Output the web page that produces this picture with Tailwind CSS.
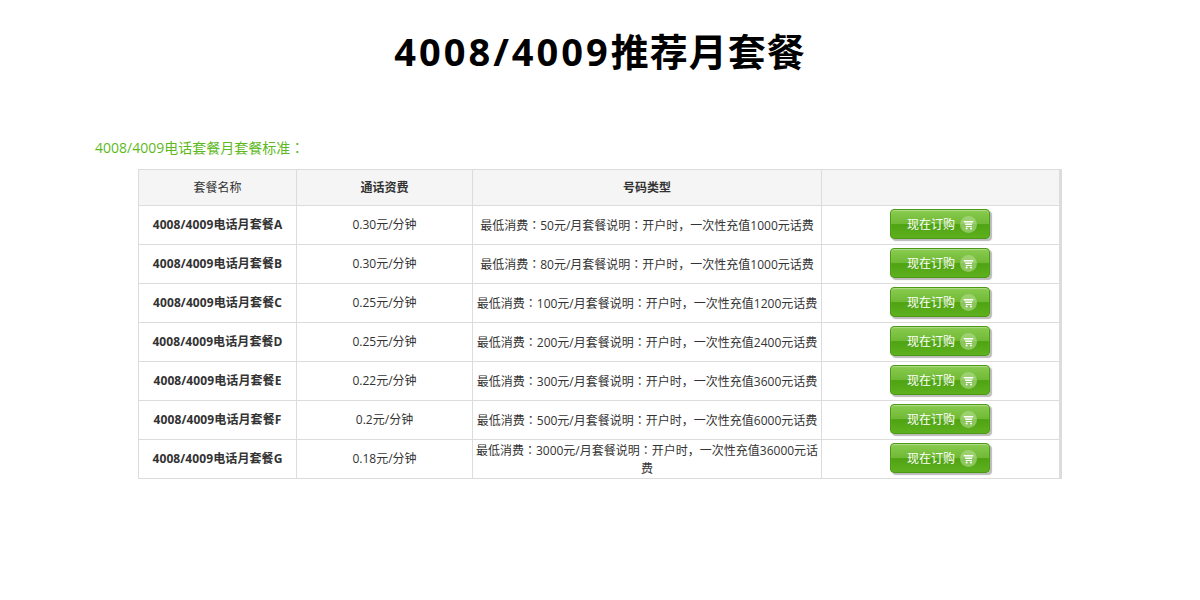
<!DOCTYPE html>
<html lang="zh-CN">
<head>
  <meta charset="UTF-8">
  <title>4008/4009推荐月套餐</title>
  <script src="https://cdn.jsdelivr.net/npm/@tailwindcss/browser@4"></script>
</head>
<body class="bg-white font-['Open_Sans','Noto_Sans_CJK_SC',sans-serif] text-[#333] overflow-hidden">
  <h1 class="pt-[25px] h-[130px] text-center text-[38px] leading-[52px] font-bold text-black tracking-[1px]"><span class="tracking-[3px]">4008/4009</span>推荐月套餐</h1>
  <p class="pl-[95px] h-[39px] pt-[7px] text-[14px] leading-[20px] text-[#5eb91e]">4008/4009电话套餐月套餐标准<span lang="zh-TW" class="font-['Noto_Sans_CJK_TC']">：</span></p>
  <table class="ml-[138px] w-[924px] table-fixed border-collapse border-r-[3px] border-[#dcdcdc] text-[12px] leading-[18px] text-center">
    <colgroup>
      <col class="w-[158px]">
      <col class="w-[176px]">
      <col class="w-[349px]">
      <col>
    </colgroup>
    <thead>
      <tr class="h-[36px] bg-[#f5f5f5]">
        <th class="border border-[#dcdcdc] font-normal">套餐名称</th>
        <th class="border border-[#dcdcdc] font-bold">通话资费</th>
        <th class="border border-[#dcdcdc] font-bold">号码类型</th>
        <th class="border border-[#dcdcdc]"></th>
      </tr>
    </thead>
    <tbody>
      <tr class="h-[39px]">
        <td class="border border-[#dcdcdc] font-bold tracking-[0.1px]">4008/4009电话月套餐A</td>
        <td class="border border-[#dcdcdc]">0.30元/分钟</td>
        <td class="border border-[#dcdcdc] px-[2px]">最低消费<span lang="zh-TW" class="font-['Noto_Sans_CJK_TC']">：</span>50元/月套餐说明<span lang="zh-TW" class="font-['Noto_Sans_CJK_TC']">：</span>开户时，一次性充值1000元话费</td>
        <td class="border border-[#dcdcdc] pr-[2px]">
          <a class="mx-auto -mt-[2px] flex h-[30px] w-[100px] items-center justify-center gap-[5px] pl-[5px] rounded-[4px] border border-[#4d9a16] bg-[linear-gradient(#8acb50,#6fb934_50%,#4fa312_52%,#5eb01e)] text-[12px] text-white shadow-[inset_0_1px_1px_rgba(255,255,255,.35),2px_2px_1px_#bbb]"><span class="pt-[2px]">现在订购</span><svg width="17" height="17" viewBox="0 0 17 17"><circle cx="8.5" cy="8.5" r="8.5" fill="#b4dc90" fill-opacity=".6"/><path d="M3.5 5h10l-.6 1.6H4.2zM5 7.6h7.4l-.5 1.4H5.4zM5.8 10h6v1h-6z" fill="#fff"/><circle cx="6.6" cy="12.6" r="1" fill="#fff"/><circle cx="11" cy="12.6" r="1" fill="#fff"/></svg></a>
        </td>
      </tr>
      <tr class="h-[39px]">
        <td class="border border-[#dcdcdc] font-bold tracking-[0.1px]">4008/4009电话月套餐B</td>
        <td class="border border-[#dcdcdc]">0.30元/分钟</td>
        <td class="border border-[#dcdcdc] px-[2px]">最低消费<span lang="zh-TW" class="font-['Noto_Sans_CJK_TC']">：</span>80元/月套餐说明<span lang="zh-TW" class="font-['Noto_Sans_CJK_TC']">：</span>开户时，一次性充值1000元话费</td>
        <td class="border border-[#dcdcdc] pr-[2px]">
          <a class="mx-auto -mt-[2px] flex h-[30px] w-[100px] items-center justify-center gap-[5px] pl-[5px] rounded-[4px] border border-[#4d9a16] bg-[linear-gradient(#8acb50,#6fb934_50%,#4fa312_52%,#5eb01e)] text-[12px] text-white shadow-[inset_0_1px_1px_rgba(255,255,255,.35),2px_2px_1px_#bbb]"><span class="pt-[2px]">现在订购</span><svg width="17" height="17" viewBox="0 0 17 17"><circle cx="8.5" cy="8.5" r="8.5" fill="#b4dc90" fill-opacity=".6"/><path d="M3.5 5h10l-.6 1.6H4.2zM5 7.6h7.4l-.5 1.4H5.4zM5.8 10h6v1h-6z" fill="#fff"/><circle cx="6.6" cy="12.6" r="1" fill="#fff"/><circle cx="11" cy="12.6" r="1" fill="#fff"/></svg></a>
        </td>
      </tr>
      <tr class="h-[39px]">
        <td class="border border-[#dcdcdc] font-bold tracking-[0.1px]">4008/4009电话月套餐C</td>
        <td class="border border-[#dcdcdc]">0.25元/分钟</td>
        <td class="border border-[#dcdcdc] px-[2px]">最低消费<span lang="zh-TW" class="font-['Noto_Sans_CJK_TC']">：</span>100元/月套餐说明<span lang="zh-TW" class="font-['Noto_Sans_CJK_TC']">：</span>开户时，一次性充值1200元话费</td>
        <td class="border border-[#dcdcdc] pr-[2px]">
          <a class="mx-auto -mt-[2px] flex h-[30px] w-[100px] items-center justify-center gap-[5px] pl-[5px] rounded-[4px] border border-[#4d9a16] bg-[linear-gradient(#8acb50,#6fb934_50%,#4fa312_52%,#5eb01e)] text-[12px] text-white shadow-[inset_0_1px_1px_rgba(255,255,255,.35),2px_2px_1px_#bbb]"><span class="pt-[2px]">现在订购</span><svg width="17" height="17" viewBox="0 0 17 17"><circle cx="8.5" cy="8.5" r="8.5" fill="#b4dc90" fill-opacity=".6"/><path d="M3.5 5h10l-.6 1.6H4.2zM5 7.6h7.4l-.5 1.4H5.4zM5.8 10h6v1h-6z" fill="#fff"/><circle cx="6.6" cy="12.6" r="1" fill="#fff"/><circle cx="11" cy="12.6" r="1" fill="#fff"/></svg></a>
        </td>
      </tr>
      <tr class="h-[39px]">
        <td class="border border-[#dcdcdc] font-bold tracking-[0.1px]">4008/4009电话月套餐D</td>
        <td class="border border-[#dcdcdc]">0.25元/分钟</td>
        <td class="border border-[#dcdcdc] px-[2px]">最低消费<span lang="zh-TW" class="font-['Noto_Sans_CJK_TC']">：</span>200元/月套餐说明<span lang="zh-TW" class="font-['Noto_Sans_CJK_TC']">：</span>开户时，一次性充值2400元话费</td>
        <td class="border border-[#dcdcdc] pr-[2px]">
          <a class="mx-auto -mt-[2px] flex h-[30px] w-[100px] items-center justify-center gap-[5px] pl-[5px] rounded-[4px] border border-[#4d9a16] bg-[linear-gradient(#8acb50,#6fb934_50%,#4fa312_52%,#5eb01e)] text-[12px] text-white shadow-[inset_0_1px_1px_rgba(255,255,255,.35),2px_2px_1px_#bbb]"><span class="pt-[2px]">现在订购</span><svg width="17" height="17" viewBox="0 0 17 17"><circle cx="8.5" cy="8.5" r="8.5" fill="#b4dc90" fill-opacity=".6"/><path d="M3.5 5h10l-.6 1.6H4.2zM5 7.6h7.4l-.5 1.4H5.4zM5.8 10h6v1h-6z" fill="#fff"/><circle cx="6.6" cy="12.6" r="1" fill="#fff"/><circle cx="11" cy="12.6" r="1" fill="#fff"/></svg></a>
        </td>
      </tr>
      <tr class="h-[39px]">
        <td class="border border-[#dcdcdc] font-bold tracking-[0.1px]">4008/4009电话月套餐E</td>
        <td class="border border-[#dcdcdc]">0.22元/分钟</td>
        <td class="border border-[#dcdcdc] px-[2px]">最低消费<span lang="zh-TW" class="font-['Noto_Sans_CJK_TC']">：</span>300元/月套餐说明<span lang="zh-TW" class="font-['Noto_Sans_CJK_TC']">：</span>开户时，一次性充值3600元话费</td>
        <td class="border border-[#dcdcdc] pr-[2px]">
          <a class="mx-auto -mt-[2px] flex h-[30px] w-[100px] items-center justify-center gap-[5px] pl-[5px] rounded-[4px] border border-[#4d9a16] bg-[linear-gradient(#8acb50,#6fb934_50%,#4fa312_52%,#5eb01e)] text-[12px] text-white shadow-[inset_0_1px_1px_rgba(255,255,255,.35),2px_2px_1px_#bbb]"><span class="pt-[2px]">现在订购</span><svg width="17" height="17" viewBox="0 0 17 17"><circle cx="8.5" cy="8.5" r="8.5" fill="#b4dc90" fill-opacity=".6"/><path d="M3.5 5h10l-.6 1.6H4.2zM5 7.6h7.4l-.5 1.4H5.4zM5.8 10h6v1h-6z" fill="#fff"/><circle cx="6.6" cy="12.6" r="1" fill="#fff"/><circle cx="11" cy="12.6" r="1" fill="#fff"/></svg></a>
        </td>
      </tr>
      <tr class="h-[39px]">
        <td class="border border-[#dcdcdc] font-bold tracking-[0.1px]">4008/4009电话月套餐F</td>
        <td class="border border-[#dcdcdc]">0.2元/分钟</td>
        <td class="border border-[#dcdcdc] px-[2px]">最低消费<span lang="zh-TW" class="font-['Noto_Sans_CJK_TC']">：</span>500元/月套餐说明<span lang="zh-TW" class="font-['Noto_Sans_CJK_TC']">：</span>开户时，一次性充值6000元话费</td>
        <td class="border border-[#dcdcdc] pr-[2px]">
          <a class="mx-auto -mt-[2px] flex h-[30px] w-[100px] items-center justify-center gap-[5px] pl-[5px] rounded-[4px] border border-[#4d9a16] bg-[linear-gradient(#8acb50,#6fb934_50%,#4fa312_52%,#5eb01e)] text-[12px] text-white shadow-[inset_0_1px_1px_rgba(255,255,255,.35),2px_2px_1px_#bbb]"><span class="pt-[2px]">现在订购</span><svg width="17" height="17" viewBox="0 0 17 17"><circle cx="8.5" cy="8.5" r="8.5" fill="#b4dc90" fill-opacity=".6"/><path d="M3.5 5h10l-.6 1.6H4.2zM5 7.6h7.4l-.5 1.4H5.4zM5.8 10h6v1h-6z" fill="#fff"/><circle cx="6.6" cy="12.6" r="1" fill="#fff"/><circle cx="11" cy="12.6" r="1" fill="#fff"/></svg></a>
        </td>
      </tr>
      <tr class="h-[39px]">
        <td class="border border-[#dcdcdc] font-bold tracking-[0.1px]">4008/4009电话月套餐G</td>
        <td class="border border-[#dcdcdc]">0.18元/分钟</td>
        <td class="border border-[#dcdcdc] px-[2px]">最低消费<span lang="zh-TW" class="font-['Noto_Sans_CJK_TC']">：</span>3000元/月套餐说明<span lang="zh-TW" class="font-['Noto_Sans_CJK_TC']">：</span>开户时，一次性充值36000元话费</td>
        <td class="border border-[#dcdcdc] pr-[2px]">
          <a class="mx-auto -mt-[2px] flex h-[30px] w-[100px] items-center justify-center gap-[5px] pl-[5px] rounded-[4px] border border-[#4d9a16] bg-[linear-gradient(#8acb50,#6fb934_50%,#4fa312_52%,#5eb01e)] text-[12px] text-white shadow-[inset_0_1px_1px_rgba(255,255,255,.35),2px_2px_1px_#bbb]"><span class="pt-[2px]">现在订购</span><svg width="17" height="17" viewBox="0 0 17 17"><circle cx="8.5" cy="8.5" r="8.5" fill="#b4dc90" fill-opacity=".6"/><path d="M3.5 5h10l-.6 1.6H4.2zM5 7.6h7.4l-.5 1.4H5.4zM5.8 10h6v1h-6z" fill="#fff"/><circle cx="6.6" cy="12.6" r="1" fill="#fff"/><circle cx="11" cy="12.6" r="1" fill="#fff"/></svg></a>
        </td>
      </tr>
    </tbody>
  </table>
</body>
</html>
